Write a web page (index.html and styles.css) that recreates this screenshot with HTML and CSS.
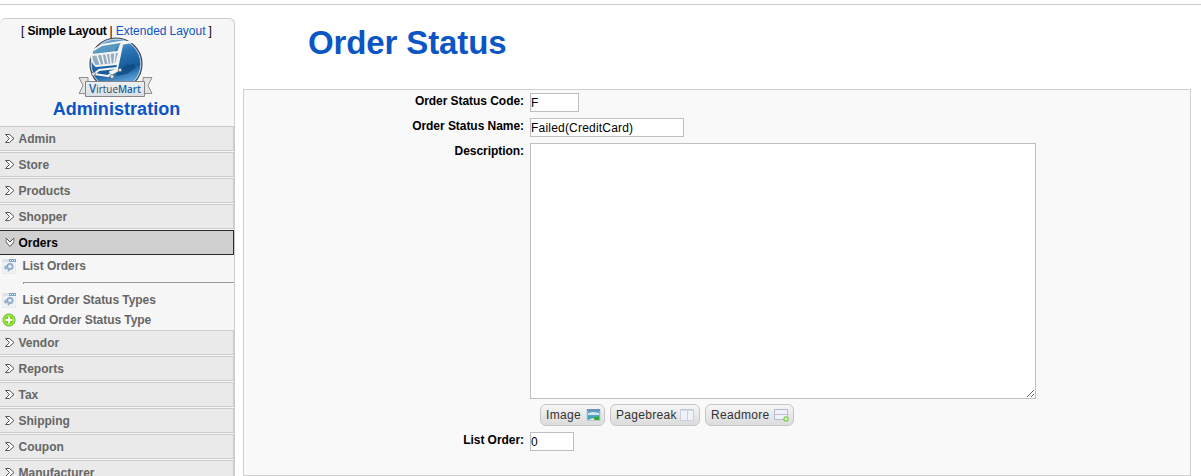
FILE: index.html
```html
<!DOCTYPE html>
<html lang="en">
<head>
<meta charset="utf-8">
<title>Order Status</title>
<link rel="stylesheet" href="styles.css">
</head>
<body>
<svg class="defs" width="0" height="0">
  <defs>
    <symbol id="chevron" viewBox="0 0 10 9"><path d="M.5.5h4l4.500 4-4.500 4h-4l4-4z" fill="#fff" stroke="#555" stroke-width="1"/></symbol>
    <symbol id="gearpage" viewBox="0 0 14 16">
      <path d="M.5 1.500h13v14H.5z" fill="#eef1f5" stroke="#e9ebef"/>
      <path d="M1 1h12v3H1z" fill="#dde2e8"/><path d="M7 1h7v3H7z" fill="#78a9cb"/><path d="M8 2h1v1H8zM10 2h1v1h-1zM12 2h1v1h-1z" fill="#e7f4fb"/>
      <circle cx="8" cy="8.500" r="2.800" fill="#c8dced" stroke="#8ca5c3" stroke-width="1.400"/><circle cx="8" cy="8.500" r="1" fill="#fff"/>
      <circle cx="4" cy="9.500" r="1.500" fill="#adc3da" stroke="#8ea5bf"/><circle cx="6.500" cy="12.500" r="1" fill="#8fa7c2"/>
    </symbol>
  </defs>
</svg>
<div class="topline"></div>
<div class="page">
  <aside class="sidebar">
    <div class="brand">
      <div class="layouts">[ <b>Simple Layout</b> | <a>Extended Layout</a> ]</div>
      <svg class="logo" width="76" height="62" viewBox="0 0 76 62">
        <defs>
          <linearGradient id="ball" x1="0" y1="0" x2=".25" y2="1"><stop offset="0" stop-color="#8fbbe0"/><stop offset=".4" stop-color="#2c73b3"/><stop offset=".7" stop-color="#155b9c"/><stop offset="1" stop-color="#69aee2"/></linearGradient>
          <linearGradient id="ribbon" x1="0" y1="0" x2="0" y2="1"><stop offset="0" stop-color="#edf0f3"/><stop offset="1" stop-color="#d9dee2"/></linearGradient>
        </defs>
        <path d="M1 40.500h9v16H1l4-8zM74 40.500h-9v16h9l-4-8z" fill="#e3e4e6" stroke="#8e8e8e"/>
        <circle cx="38" cy="27" r="26" fill="url(#ball)" stroke="#484b50" stroke-width="1.200"/>
        <circle cx="38" cy="27" r="24.800" fill="none" stroke="#c0d6e8" stroke-width="1"/>
        <path d="M38 37l10-9 8-1 2 4-9 6-10 2z" fill="#0e477e" opacity=".7"/>
        <path d="M14 15l10-6 17-4-5 10-22 4z" fill="#5b9cbf" opacity=".8"/>
        <path d="M14 18l26-4-1 14-20 1q-4-4-5-11z" fill="#aebac4" opacity=".8"/>
        <g fill="none" stroke="#f4f4f3" stroke-linecap="round" stroke-linejoin="round">
          <path d="M54 5l-11 2-3 8-26 3V14l10-6 18-3h12" stroke-width="1.800"/>
          <path d="M13 18q1 8 5 11l20-2 5-19M44 8l-5 24" stroke-width="2"/>
          <path d="M19 18l3 9M24 18l2 9M28 17l2 9M32 17l1 10M37 16l-1 11" stroke-width="1.500"/>
          <path d="M39 31l-18 2-5 4 14 2 10-6M32 35l6-2" stroke-width="2.200"/>
        </g>
        <g fill="#e5e5e5" stroke="#5d6570" stroke-width=".8"><circle cx="15.500" cy="37" r="1.900"/><circle cx="34" cy="39.500" r="2"/><circle cx="42" cy="33" r="1.800"/></g>
        <path d="M7.500 44.500h59v15h-59z" fill="url(#ribbon)" stroke="#858585"/>
        <text class="logo-text" x="11" y="55.500" textLength="52" lengthAdjust="spacingAndGlyphs"><tspan class="vee">V</tspan><tspan class="virtue">irtue</tspan><tspan class="mart">Mart</tspan></text>
      </svg>
      <div class="admin-title">Administration</div>
    </div>
    <nav class="menu">
      <div class="item"><svg><use href="#chevron"/></svg>Admin</div>
      <div class="item"><svg><use href="#chevron"/></svg>Store</div>
      <div class="item"><svg><use href="#chevron"/></svg>Products</div>
      <div class="item"><svg><use href="#chevron"/></svg>Shopper</div>
      <div class="item open"><svg><use href="#chevron"/></svg>Orders</div>
      <div class="submenu">
        <div class="sub"><svg><use href="#gearpage"/></svg>List Orders</div>
        <div class="rule"></div>
        <div class="sub"><svg><use href="#gearpage"/></svg>List Order Status Types</div>
        <div class="sub"><svg viewBox="0 0 14 16"><circle cx="7" cy="8" r="6" fill="#79d51f" stroke="#62b01c"/><circle cx="7" cy="8" r="5" fill="none" stroke="#b4f26e" stroke-width="1"/><path d="M7 4.500v7M3.500 8h7" stroke="#fff" stroke-width="2"/></svg>Add Order Status Type</div>
      </div>
      <div class="item"><svg><use href="#chevron"/></svg>Vendor</div>
      <div class="item"><svg><use href="#chevron"/></svg>Reports</div>
      <div class="item"><svg><use href="#chevron"/></svg>Tax</div>
      <div class="item"><svg><use href="#chevron"/></svg>Shipping</div>
      <div class="item"><svg><use href="#chevron"/></svg>Coupon</div>
      <div class="item"><svg><use href="#chevron"/></svg>Manufacturer</div>
    </nav>
  </aside>
  <main class="main">
    <h1>Order Status</h1>
    <form class="panel">
      <label for="code">Order Status Code:</label><input id="code" class="code" value="F">
      <label for="name">Order Status Name:</label><input id="name" class="name" value="Failed(CreditCard)">
      <label for="desc">Description:</label>
      <div class="editor">
        <textarea id="desc"></textarea>
        <div class="buttons">
          <button type="button">Image<svg width="15" height="14" viewBox="0 0 15 14"><path d="M1 1.500h13v11H1z" fill="#5e9fc3" stroke="#b7cad6"/><path d="M1 1h13v2H1z" fill="#6c93b6"/><path d="M2 5l5-1 6 1v2H2z" fill="#cceaf0"/><path d="M2 8h8v3H2z" fill="#3fa5bd"/><path d="M5 12l5-3 3-1v4z" fill="#2bad35"/><path d="M2 12l5-2 2 2z" fill="#f3e6bd"/></svg></button>
          <button type="button">Pagebreak<svg width="15" height="14" viewBox="0 0 15 14"><path d="M.5 1.500h13v11H.5z" fill="#eff2f8" stroke="#c9cfdf"/><path d="M1 2h12" stroke="#b9c0d3"/><path d="M7.500 2v10" stroke="#c9cfdf"/></svg></button>
          <button type="button">Readmore<svg width="15" height="14" viewBox="0 0 15 14"><path d="M.5 1.500h13v10H.5z" fill="#f0f2f8" stroke="#b4bace"/><path d="M1 6.500h12" stroke="#bdc3d5"/><circle cx="12" cy="11" r="2.700" fill="#7bcf42"/><path d="M12 9.500v3M10.500 11h3" stroke="#fff"/></svg></button>
        </div>
      </div>
      <label for="order">List Order:</label><input id="order" class="order" value="0">
    </form>
  </main>
</div>
</body>
</html>
```
FILE: styles.css
```css
* { box-sizing: border-box; }
html, body { margin: 0; height: 476px; overflow: hidden; }
body { background: #fff; font: 12px "Liberation Sans", Arial, sans-serif; color: #000; }
.defs { display: block; }
.topline { height: 5px; border-bottom: 1px solid #ccc; }
.page { display: flex; align-items: flex-start; }
.sidebar { width: 235px; height: 480px; margin-top: 13px; background: #f7f7f7; border: 1px solid #ccc; border-width: 1px 1px 0 0; border-radius: 6px 6px 0 0; overflow: hidden; }
.brand { height: 107px; display: flex; flex-direction: column; align-items: center; }
.layouts { margin-top: 5px; margin-right: 1px; line-height: 14px; white-space: pre; word-spacing: -.3px; }
.layouts b { letter-spacing: -.2px; }
.layouts a { color: #0b55c4; }
.logo { display: block; margin: -1px 2px 0 0; flex: none; }
.logo-text { font: 11px "Open Sans", sans-serif; }
.vee, .mart { fill: #1764a6; font-weight: 600; }
.vee { font-size: 13px; }
.virtue { fill: #3b4855; }
.admin-title { font-size: 18px; line-height: 20px; font-weight: bold; color: #0b55c4; letter-spacing: .05px; margin-right: 1px; }
.item { height: 25px; margin-bottom: 1px; display: flex; align-items: center; padding-left: 5px; border: 1px solid #ccc; border-left: 0; background: #eaeaea; color: #666; font-weight: bold; }
.item svg { width: 10px; height: 9px; margin-right: 3.500px; }
.open { background: #d0d0d0; border-color: #28282c; color: #000; margin-bottom: 0; }
.open svg { transform: rotate(90deg); }
.submenu { height: 75px; padding-top: 1px; color: #666; font-weight: bold; }
.sub { display: flex; align-items: center; height: 20px; padding-left: 2px; letter-spacing: -.05px; }
.sub svg { width: 14px; height: 16px; margin-right: 6.500px; }
.rule { height: 2px; margin: 6px 0 6px 23px; border-top: 1px solid #999; border-left: 1px solid #999; }
.main { flex: 1; padding: 18px 10px 0 8px; }
h1 { margin: 0 0 26px 65px; font-size: 33px; line-height: 40px; letter-spacing: -.12px; color: #0b55c4; }
.panel { height: 387px; padding-top: 3px; border: 1px solid #d0d0d0; background: #f9f9f9; display: grid; grid-template-columns: 280px 1fr; grid-template-rows: 25px 25px 289px 25px; column-gap: 6px; }
.panel label { text-align: right; font-weight: bold; line-height: 16px; letter-spacing: -.05px; }
input, textarea { font: 12px "Liberation Sans", Arial, sans-serif; letter-spacing: .2px; border: 1px solid #bfbfbf; border-radius: 0; padding: 1px 0; margin: 0; background: #fff; color: #000; outline: 0; }
input { height: 19px; }
.code { width: 49px; }
.name { width: 154px; }
.order { width: 44px; }
textarea { display: block; width: 506px; height: 256px; }
.buttons { display: flex; gap: 5px; padding: 5px 0 0 10px; }
button { display: flex; align-items: center; justify-content: space-between; height: 22px; width: 65px; padding: 0 3px 0 5px; border: 1px solid #c6c6c6; border-radius: 6px; background: linear-gradient(#f7f7f7, #e8e8e8 50%, #dcdcdc); font: 12px "Liberation Sans", Arial, sans-serif; letter-spacing: .3px; color: #333; }
button:nth-child(2) { width: 90px; padding-right: 4px; }
button:nth-child(3) { width: 89px; padding-right: 4px; }
```
